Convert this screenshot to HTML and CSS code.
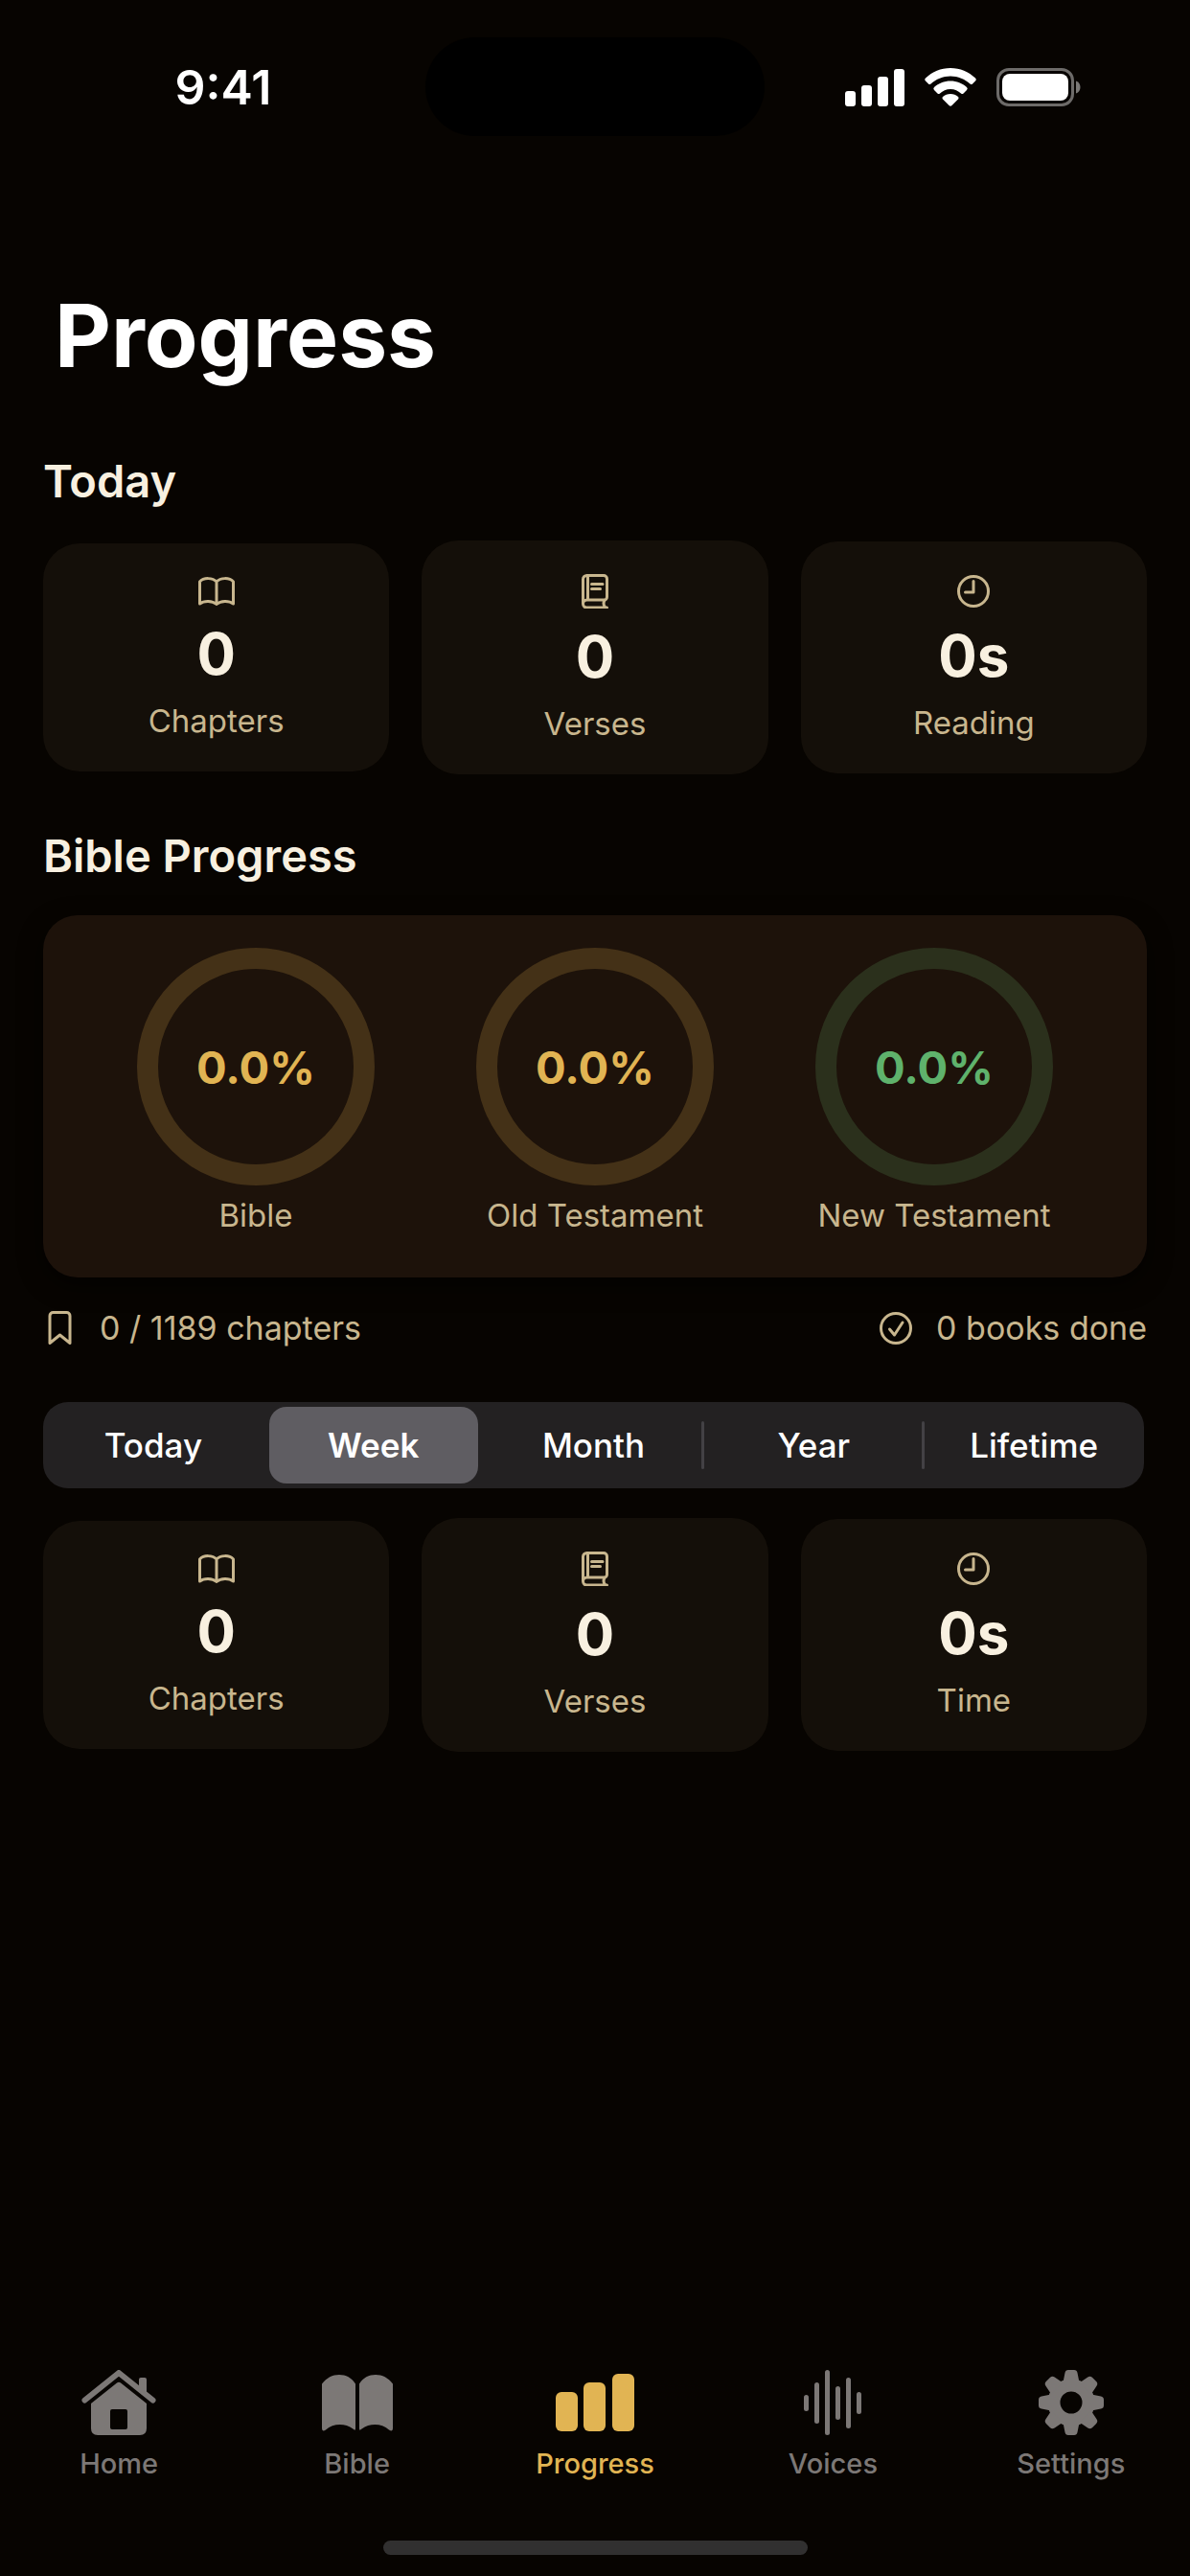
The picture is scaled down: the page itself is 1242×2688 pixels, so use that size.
FILE: index.html
```html
<!DOCTYPE html>
<html lang="en">
<head>
  <meta charset="UTF-8" />
  <meta name="viewport" content="width=device-width, initial-scale=1.0" />
  <title>Progress</title>
  <link rel="stylesheet" href="styles.css">
</head>
<body>
  <!-- shared icons -->
  <svg class="sprite" aria-hidden="true">
    <symbol id="icon-open-book" viewBox="0 0 38 30">
      <path d="M19 5C15 .6 5.500 .4 1.500 5V28C6 24.500 14.500 24.500 19 28.500C23.500 24.500 32 24.500 36.500 28V5C32.500 .4 23 .6 19 5V28" />
    </symbol>
    <symbol id="icon-closed-book" viewBox="0 0 28 36">
      <path d="M26.500 35H5.500A4 4 0 0 1 1.500 31V5.500A4 4 0 0 1 5.500 1.500H23A3.500 3.500 0 0 1 26.500 5V24A3 3 0 0 1 23.500 27H5.500A4 4 0 0 0 1.500 31M6.500 2V27M24 27.500C22.500 30 22.500 32 24.500 34.500M10.500 10.500H22M10.500 15.500H19.500" />
    </symbol>
    <symbol id="icon-clock" viewBox="0 0 34 34">
      <circle cx="17" cy="17" r="15.500" />
      <path d="M17 6.500V18H8.500" />
    </symbol>
  </svg>

  <div class="status-bar">
    <span class="time">9:41</span>
    <div class="island"></div>
    <div class="status-icons">
      <svg width="62" height="40" viewBox="0 0 62 40" fill="#fff">
        <rect x="0" y="24" width="11" height="16" rx="3" />
        <rect x="17" y="18" width="11" height="22" rx="3" />
        <rect x="34" y="9" width="11" height="31" rx="3" />
        <rect x="51" y="1" width="11" height="39" rx="3" />
      </svg>
      <svg width="54" height="40" viewBox="0 0 54 40" fill="#fff">
        <path d="M27 0C37 0 46 4 53 10.500Q54.500 12 53 13.500L50 16.500Q49 17.500 47.500 16.500C42 11.500 35 8.500 27 8.500S12 11.500 6.500 16.500Q5 17.500 4 16.500L1 13.500Q-.5 12 1 10.500C8 4 17 0 27 0Z" />
        <path d="M27 13.500C33.500 13.500 39.500 16 44 20Q45.500 21.500 44 23L40.500 26.500Q39.500 27.500 38 26.500C35 24 31.500 22 27 22S19 24 16 26.500Q14.500 27.500 13.500 26.500L10 23Q8.500 21.500 10 20C14.500 16 20.500 13.500 27 13.500Z" />
        <path d="M27 27C30 27 33 28 35 30Q36 31 35 32.500L28.500 39Q27 40.500 25.500 39L19 32.500Q18 31 19 30C21 28 24 27 27 27Z" />
      </svg>
      <svg width="88" height="40" viewBox="0 0 88 40">
        <rect x="1.500" y="1.500" width="78" height="37" rx="11.500" fill="none" stroke="#6d6b69" stroke-width="3" />
        <rect x="6" y="6" width="69" height="28" rx="8" fill="#fff" />
        <path d="M83 13.500C89 15.500 89 24.500 83 26.500Z" fill="#7b7977" />
      </svg>
    </div>
  </div>

  <main>
    <h1>Progress</h1>

    <h2>Today</h2>
    <div class="cards">
      <div class="card">
        <svg class="icon" width="38" height="30"><use href="#icon-open-book" /></svg>
        <span class="number">0</span>
        <span class="label">Chapters</span>
      </div>
      <div class="card">
        <svg class="icon" width="28" height="36"><use href="#icon-closed-book" /></svg>
        <span class="number">0</span>
        <span class="label">Verses</span>
      </div>
      <div class="card">
        <svg class="icon" width="34" height="34"><use href="#icon-clock" /></svg>
        <span class="number">0s</span>
        <span class="label">Reading</span>
      </div>
    </div>

    <h2>Bible Progress</h2>
    <div class="panel">
      <div class="goal">
        <div class="ring">0.0%</div>
        <span class="label">Bible</span>
      </div>
      <div class="goal">
        <div class="ring">0.0%</div>
        <span class="label">Old Testament</span>
      </div>
      <div class="goal">
        <div class="ring green">0.0%</div>
        <span class="label">New Testament</span>
      </div>
    </div>

    <div class="totals">
      <span class="total">
        <svg class="icon" width="34" height="36" viewBox="0 0 34 36">
          <path d="M7 33.500V5A3.500 3.500 0 0 1 10.500 1.500H24.500A3.500 3.500 0 0 1 28 5V33.500L17.500 25Z" />
        </svg>
        <span class="label">0 / 1189 chapters</span>
      </span>
      <span class="total">
        <svg class="icon" width="34" height="34" viewBox="0 0 34 34">
          <circle cx="17" cy="17" r="15.500" />
          <path d="M10.500 18L15.500 24L24 11" />
        </svg>
        <span class="label">0 books done</span>
      </span>
    </div>

    <div class="segments" role="radiogroup" aria-label="Period">
      <input type="radio" name="period" id="today" /><label for="today">Today</label>
      <input type="radio" name="period" id="week" checked /><label for="week">Week</label>
      <input type="radio" name="period" id="month" /><label for="month">Month</label>
      <input type="radio" name="period" id="year" /><label for="year">Year</label>
      <input type="radio" name="period" id="lifetime" /><label for="lifetime">Lifetime</label>
    </div>

    <div class="cards">
      <div class="card">
        <svg class="icon" width="38" height="30"><use href="#icon-open-book" /></svg>
        <span class="number">0</span>
        <span class="label">Chapters</span>
      </div>
      <div class="card">
        <svg class="icon" width="28" height="36"><use href="#icon-closed-book" /></svg>
        <span class="number">0</span>
        <span class="label">Verses</span>
      </div>
      <div class="card">
        <svg class="icon" width="34" height="34"><use href="#icon-clock" /></svg>
        <span class="number">0s</span>
        <span class="label">Time</span>
      </div>
    </div>
  </main>

  <nav class="tabs">
    <a href="#home">
      <svg width="78" height="68" viewBox="0 0 78 68">
        <path d="M3.500 31.500L39 3L74.500 31.500" fill="none" stroke="currentColor" stroke-width="6" stroke-linecap="round" stroke-linejoin="round" />
        <path d="M60 17V10Q60 8 62 8H66Q68 8 68 10V25Z" />
        <path fill-rule="evenodd" d="M37 13.500Q39 12 41 13.500L68 35V61Q68 68 61 68H17Q10 68 10 61V35ZM32 41Q30 41 30 43V60Q30 62 32 62H46Q48 62 48 60V43Q48 41 46 41Z" />
      </svg>
      <span>Home</span>
    </a>
    <a href="#bible">
      <svg width="74" height="68" viewBox="0 0 74 68">
        <path d="M0 14.500C5 8 11 5 18 5S31 8 35 14.500V61Q35 64 32.500 61.500C24 55.500 12 55.500 4 62.500Q0 65 0 61Z" />
        <path d="M74 14.500C69 8 63 5 56 5S43 8 39 14.500V61Q39 64 41.500 61.500C50 55.500 62 55.500 70 62.500Q74 65 74 61Z" />
      </svg>
      <span>Bible</span>
    </a>
    <a href="#progress" class="active">
      <svg width="82" height="68" viewBox="0 0 82 68">
        <rect x="0" y="23" width="23" height="41" rx="6" />
        <rect x="29" y="13" width="23" height="51" rx="6" />
        <rect x="59" y="4" width="23" height="60" rx="6" />
      </svg>
      <span>Progress</span>
    </a>
    <a href="#voices">
      <svg width="60" height="68" viewBox="0 0 60 68">
        <rect x="0" y="26" width="5" height="17" rx="2.500" />
        <rect x="11" y="13" width="5" height="43" rx="2.500" />
        <rect x="22" y="0" width="5" height="68" rx="2.500" />
        <rect x="33" y="17" width="5" height="35" rx="2.500" />
        <rect x="44" y="8" width="5" height="53" rx="2.500" />
        <rect x="55" y="23" width="5" height="23" rx="2.500" />
      </svg>
      <span>Voices</span>
    </a>
    <a href="#settings">
      <svg width="68" height="68" viewBox="-34 -34 68 68">
        <defs>
          <path id="tooth" d="M-8.500 -21L-6.500 -31Q-6 -34 -3 -34H3Q6 -34 6.500 -31L8.500 -21Z" />
        </defs>
        <path fill-rule="evenodd" d="M0 -24.500A24.500 24.500 0 1 1 0 24.500A24.500 24.500 0 1 1 0 -24.500ZM0 -11.500A11.500 11.500 0 1 0 0 11.500A11.500 11.500 0 1 0 0 -11.500Z" />
        <use href="#tooth" />
        <use href="#tooth" transform="rotate(45)" />
        <use href="#tooth" transform="rotate(90)" />
        <use href="#tooth" transform="rotate(135)" />
        <use href="#tooth" transform="rotate(180)" />
        <use href="#tooth" transform="rotate(225)" />
        <use href="#tooth" transform="rotate(270)" />
        <use href="#tooth" transform="rotate(315)" />
      </svg>
      <span>Settings</span>
    </a>
  </nav>
  <div class="home-indicator"></div>
</body>
</html>
```

FILE: styles.css
```css
* {
  box-sizing: border-box;
}
body {
  margin: 0;
  min-height: 100vh;
  display: flex;
  flex-direction: column;
  background-color: #070401;
  color: #f8f0e0;
  font-family: Inter, "Liberation Sans", sans-serif;
}
.sprite {
  display: none;
}

/* status bar */
.status-bar {
  display: grid;
  grid-template-columns: 1fr 354px 1fr;
  align-items: center;
  padding-top: 39px;
  color: #fff;
}
.time {
  padding-left: 22px;
  font-size: 50px;
  font-weight: 600;
  line-height: 60px;
  text-align: center;
}
.island {
  height: 103px;
  border-radius: 52px;
  background-color: #000;
}
.status-icons {
  display: flex;
  gap: 21px;
  padding-left: 84px;
}

main {
  padding: 0 45px;
}
h1 {
  margin: 152px 12px 66px;
  color: #fff;
  font-size: 91px;
  font-weight: 700;
  line-height: 112px;
}
h2 {
  margin: 0 0 32px;
  font-size: 47px;
  font-weight: 600;
  line-height: 60px;
}

/* number cards */
.cards {
  display: flex;
  align-items: center;
  gap: 34px;
}
.cards + h2 {
  margin-top: 55px;
}
.card {
  flex: 1;
  display: flex;
  flex-direction: column;
  align-items: center;
  gap: 14px;
  padding: 35px 0 33px;
  border-radius: 38px;
  background-color: #140f09;
}
.icon {
  display: block;
  fill: none;
  stroke: #c8b68e;
  stroke-width: 3px;
  stroke-linecap: round;
  stroke-linejoin: round;
}
.number {
  font-size: 60px;
  font-weight: 700;
  line-height: 72px;
}
.label {
  color: #c8b68e;
  font-size: 33px;
  line-height: 40px;
}

/* rings */
.panel {
  display: flex;
  padding: 34px 45px 45px;
  border-radius: 36px;
  background-color: #1d120a;
  box-shadow: 0 8px 24px rgba(0, 0, 0, 0.6);
}
.goal {
  flex: 1;
  display: flex;
  flex-direction: column;
  align-items: center;
  gap: 11px;
}
.ring {
  display: flex;
  align-items: center;
  justify-content: center;
  width: 248px;
  height: 248px;
  border: 22px solid #443117;
  border-radius: 50%;
  color: #e1b453;
  font-size: 47px;
  font-weight: 700;
}
.ring.green {
  border-color: #2b301c;
  color: #5fb26c;
}

.totals {
  display: flex;
  justify-content: space-between;
  margin: 33px 0 57px;
}
.total {
  display: flex;
  align-items: center;
  gap: 25px;
}
.total .label {
  font-size: 34px;
}

/* period picker */
.segments {
  display: flex;
  height: 90px;
  margin: 0 3px 31px 0;
  border-radius: 26px;
  background-color: #232122;
}
.segments input {
  position: absolute;
  opacity: 0;
}
.segments label {
  position: relative;
  flex: 1;
  display: flex;
  align-items: center;
  justify-content: center;
  margin: 5px 6px;
  border-radius: 18px;
  color: #fff;
  font-size: 35px;
  font-weight: 500;
  cursor: pointer;
}
.segments input:checked + label {
  background-color: #5f5d62;
  font-weight: 600;
}
.segments label:not(:last-child)::after {
  content: "";
  position: absolute;
  top: 15px;
  right: -7px;
  width: 3px;
  height: 50px;
  border-radius: 2px;
  background-color: #434145;
}
.segments input:checked + label::after,
.segments label:has(+ input:checked)::after {
  display: none;
}

/* tab bar */
.tabs {
  display: flex;
  margin-top: auto;
  padding-top: 40px;
}
.tabs a {
  flex: 1;
  display: flex;
  flex-direction: column;
  align-items: center;
  gap: 13px;
  color: #7c7876;
  font-size: 29px;
  font-weight: 500;
  line-height: 34px;
  text-decoration: none;
}
.tabs a.active {
  color: #e1b453;
}
.tabs svg {
  fill: currentColor;
}
.home-indicator {
  width: 443px;
  height: 15px;
  margin: 63px auto 22px;
  border-radius: 8px;
  background-color: #313030;
}
```
